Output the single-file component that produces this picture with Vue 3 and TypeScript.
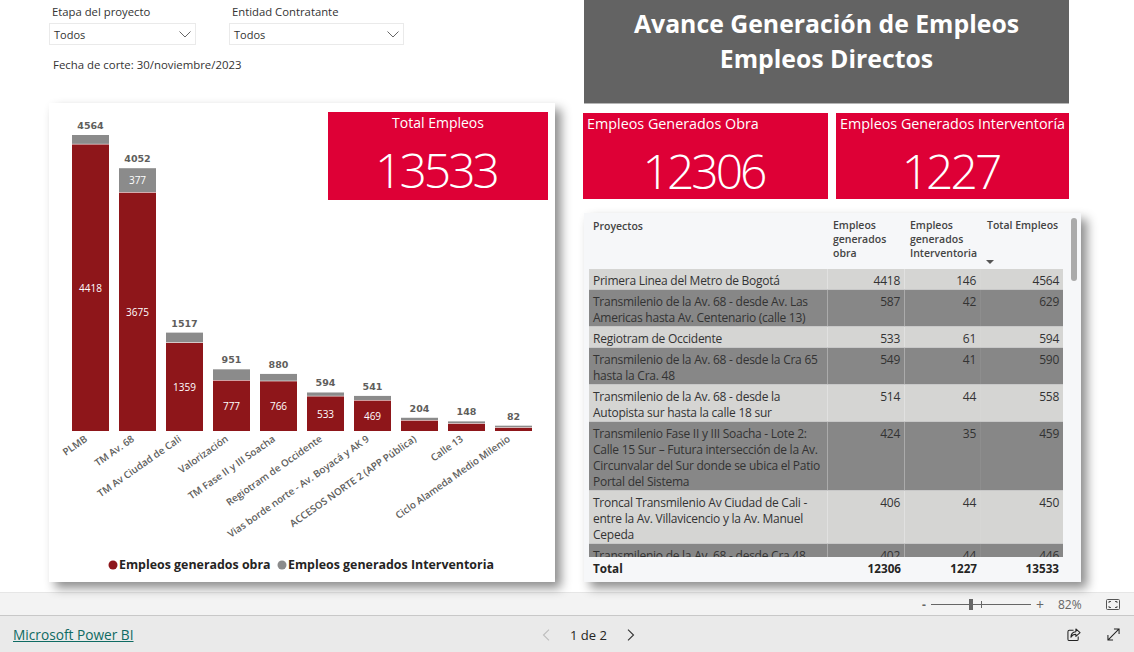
<script setup lang="ts">
type Bar = { name: string; obra: number; inter: number; showInter?: boolean; showObra?: boolean }
type Row = { name: string; obra: number; inter: number; total: number }

const baseY = 431
const scale = 296 / 4564
const barW = 37

const bars: Bar[] = [
  { name: 'PLMB', obra: 4418, inter: 146, showObra: true },
  { name: 'TM Av. 68', obra: 3675, inter: 377, showObra: true, showInter: true },
  { name: 'TM Av Ciudad de Cali', obra: 1359, inter: 158, showObra: true },
  { name: 'Valorización', obra: 777, inter: 174, showObra: true },
  { name: 'TM Fase II y III Soacha', obra: 766, inter: 114, showObra: true },
  { name: 'Regiotram de Occidente', obra: 533, inter: 61, showObra: true },
  { name: 'Vias borde norte - Av. Boyacá y AK 9', obra: 469, inter: 72, showObra: true },
  { name: 'ACCESOS NORTE 2 (APP Pública)', obra: 160, inter: 44 },
  { name: 'Calle 13', obra: 112, inter: 36 },
  { name: 'Ciclo Alameda Medio Milenio', obra: 50, inter: 32 },
]

const rows: Row[] = [
  { name: 'Primera Linea del Metro de Bogotá', obra: 4418, inter: 146, total: 4564 },
  { name: 'Transmilenio de la Av. 68 - desde Av. Las\nAmericas hasta Av. Centenario (calle 13)', obra: 587, inter: 42, total: 629 },
  { name: 'Regiotram de Occidente', obra: 533, inter: 61, total: 594 },
  { name: 'Transmilenio de la Av. 68 - desde la Cra 65\nhasta la Cra. 48', obra: 549, inter: 41, total: 590 },
  { name: 'Transmilenio de la Av. 68 - desde la\nAutopista sur hasta la calle 18 sur', obra: 514, inter: 44, total: 558 },
  { name: 'Transmilenio Fase II y III Soacha - Lote 2:\nCalle 15 Sur – Futura intersección de la Av.\nCircunvalar del Sur donde se ubica el Patio\nPortal del Sistema', obra: 424, inter: 35, total: 459 },
  { name: 'Troncal Transmilenio Av Ciudad de Cali -\nentre la Av. Villavicencio y la Av. Manuel\nCepeda', obra: 406, inter: 44, total: 450 },
  { name: 'Transmilenio de la Av. 68 - desde Cra 48\nhasta la calle 100', obra: 402, inter: 44, total: 446 },
]

function barX(i: number): number {
  return 72 + i * 47
}

function h(value: number): number {
  return value * scale
}
</script>

<template>
  <div class="page">
    <main class="canvas">
      <section class="left">
        <div class="filters">
          <div class="slicer slicer--etapa">
            <div class="slicer-title">Etapa del proyecto</div>
            <div class="dropdown">
              <span>Todos</span>
              <svg width="12" height="7" viewBox="0 0 12 7"><path d="M.5.5L6 6l5.500-5.500" fill="none" stroke="#666" /></svg>
            </div>
          </div>
          <div class="slicer slicer--entidad">
            <div class="slicer-title">Entidad Contratante</div>
            <div class="dropdown">
              <span>Todos</span>
              <svg width="12" height="7" viewBox="0 0 12 7"><path d="M.5.5L6 6l5.500-5.500" fill="none" stroke="#666" /></svg>
            </div>
          </div>
        </div>
        <div class="cutoff">Fecha de corte: 30/noviembre/2023</div>

        <div class="chart-card">
          <svg class="chart" viewBox="49 103 506 479" width="506" height="479">
            <g v-for="(bar, i) in bars" :key="bar.name">
              <rect :x="barX(i)" :y="baseY - h(bar.obra)" :width="barW" :height="h(bar.obra)" fill="#8e161a" />
              <rect :x="barX(i)" :y="baseY - h(bar.obra + bar.inter)" :width="barW" :height="h(bar.inter) - 0.6" fill="#8b8b8b" />
              <text class="total" :x="barX(i) + barW / 2" :y="baseY - h(bar.obra + bar.inter) - 6">{{ bar.obra + bar.inter }}</text>
              <text v-if="bar.showObra" class="inside" :x="barX(i) + barW / 2" :y="baseY - h(bar.obra) / 2 + 4">{{ bar.obra }}</text>
              <text v-if="bar.showInter" class="inside" :x="barX(i) + barW / 2" :y="baseY - h(bar.obra) - h(bar.inter) / 2 + 4">{{ bar.inter }}</text>
              <text class="tick" :transform="`translate(${barX(i) + barW / 2 - 2.5} 440.500) rotate(-35)`">{{ bar.name }}</text>
            </g>
            <circle cx="113" cy="565" r="4.5" fill="#8e161a" />
            <text class="legend" x="119" y="569">Empleos generados obra</text>
            <circle cx="282" cy="565" r="4.5" fill="#8b8b8b" />
            <text class="legend" x="288" y="569">Empleos generados Interventoria</text>
          </svg>
          <div class="kpi kpi--total">
            <div class="kpi-label">Total Empleos</div>
            <div class="kpi-value">13533</div>
          </div>
        </div>
      </section>

      <section class="right">
        <header class="title">Avance Generación de Empleos<br />Empleos Directos</header>
        <div class="kpis">
          <div class="kpi kpi--obra">
            <div class="kpi-label">Empleos Generados Obra</div>
            <div class="kpi-value">12306</div>
          </div>
          <div class="kpi kpi--inter">
            <div class="kpi-label">Empleos Generados Interventoría</div>
            <div class="kpi-value">1227</div>
          </div>
        </div>

        <div class="table-card">
          <div class="table">
            <div class="thead">
              <div class="cell cell--name">Proyectos</div>
              <div class="cell">Empleos generados obra</div>
              <div class="cell">Empleos generados Interventoria</div>
              <div class="cell cell--sorted">
                Total Empleos
                <span class="sort-arrow"></span>
              </div>
            </div>
            <div class="tbody">
              <div v-for="(row, i) in rows" :key="row.name" class="row" :class="i % 2 ? 'row--dark' : 'row--light'">
                <div class="cell cell--name">{{ row.name }}</div>
                <div class="cell cell--num">{{ row.obra }}</div>
                <div class="cell cell--num">{{ row.inter }}</div>
                <div class="cell cell--num cell--last">{{ row.total }}</div>
              </div>
            </div>
            <div class="tfoot">
              <div class="cell cell--name">Total</div>
              <div class="cell cell--num">12306</div>
              <div class="cell cell--num">1227</div>
              <div class="cell cell--num">13533</div>
            </div>
          </div>
          <div class="scrollbar"></div>
        </div>
      </section>
    </main>

    <div class="zoom-bar">
      <span class="zoom-sign">-</span>
      <div class="slider"><i class="slider-mid"></i><i class="slider-thumb"></i></div>
      <span class="zoom-sign zoom-sign--plus">+</span>
      <span class="zoom-value">82%</span>
      <svg class="fit" width="14" height="11" viewBox="0 0 14 11">
        <rect x=".5" y=".5" width="13" height="10" rx="1" fill="none" stroke="#555" />
        <path d="M3 4V2.500h2M9 2.500h2V4M11 7v1.500H9M5 8.500H3V7" fill="none" stroke="#555" />
      </svg>
    </div>

    <footer class="footer">
      <a class="brand">Microsoft Power BI</a>
      <nav class="pager">
        <svg width="8" height="12" viewBox="0 0 8 12"><path d="M7 .7L1.500 6 7 11.300" fill="none" stroke="#bdbdbd" stroke-width="1.1" /></svg>
        <span class="pager-text">1 de 2</span>
        <svg width="8" height="12" viewBox="0 0 8 12"><path d="M1 .7L6.500 6 1 11.300" fill="none" stroke="#333" stroke-width="1.1" /></svg>
      </nav>
      <div class="actions">
        <svg width="14" height="14" viewBox="0 0 15 15">
          <path d="M7 2.500H2.500a1.500 1.500 0 0 0-1.500 1.500v8a1.500 1.500 0 0 0 1.500 1.500h8a1.500 1.500 0 0 0 1.500-1.500V9" fill="none" stroke="#222" stroke-width="1.1" />
          <path d="M9.500 1l4.500 4-4.500 4V6.800C7 6.800 5.200 7.800 4.200 10c0-3.600 2-5.700 5.300-6z" fill="none" stroke="#222" stroke-width="1.1" stroke-linejoin="round" />
        </svg>
        <svg width="13" height="13" viewBox="0 0 14 14">
          <path d="M1 13L13 1M7.500 1H13v5.500M1 7.500V13h5.500" fill="none" stroke="#222" stroke-width="1.1" />
        </svg>
      </div>
    </footer>
  </div>
</template>

<style scoped>
.page {
  width: 1134px;
  height: 652px;
  display: flex;
  flex-direction: column;
  overflow: hidden;
  background: #fff;
  font-family: "Open Sans", "Noto Sans", sans-serif;
  color: #252423;
}

.canvas {
  height: 592px;
  display: flex;
  flex: none;
}

.left {
  width: 506px;
  margin-left: 49px;
  display: flex;
  flex-direction: column;
}

.filters {
  display: flex;
  gap: 33px;
  padding-top: 3px;
}

.slicer-title {
  height: 20px;
  padding-left: 3px;
  font-size: 11.3px;
  line-height: 17px;
  color: #333;
}

.slicer--etapa {
  width: 147px;
}

.slicer--entidad {
  width: 175px;
}

.dropdown {
  height: 22px;
  box-sizing: border-box;
  border: 1px solid #eaeaea;
  display: flex;
  align-items: center;
  justify-content: space-between;
  padding: 0 4px;
  font-size: 11px;
  color: #333;
}

.cutoff {
  margin-top: 12px;
  padding-left: 4px;
  font-size: 11.4px;
  line-height: 16px;
  color: #333;
}

.chart-card {
  position: relative;
  margin-top: 30px;
  width: 506px;
  height: 479px;
  background: #fff;
  box-shadow: 6px 6px 10px rgba(0, 0, 0, 0.45);
}

.chart {
  display: block;
}

.chart text {
  font-family: "Open Sans", "Noto Sans", sans-serif;
}

.chart .total {
  font-family: "DejaVu Sans", sans-serif;
  font-size: 9.5px;
  font-weight: 700;
  fill: #605e5c;
  text-anchor: middle;
}

.inside {
  font-size: 10px;
  fill: #fff;
  text-anchor: middle;
}

.tick {
  font-size: 9.9px;
  font-weight: 600;
  fill: #605e5c;
  text-anchor: end;
}

.legend {
  font-size: 12.4px;
  font-weight: 700;
  fill: #252423;
}

.kpi {
  background: #de0036;
  color: #fff;
}

.kpi--total {
  position: absolute;
  left: 279px;
  top: 9px;
  width: 220px;
  height: 88px;
  text-align: center;
}

.kpi--obra {
  width: 245px;
  height: 86px;
}

.kpi--inter {
  width: 233px;
  height: 86px;
}

.kpi--obra .kpi-label,
.kpi--inter .kpi-label {
  padding-left: 4px;
  font-size: 14.35px;
}

.kpi-label {
  font-size: 14px;
  line-height: 22px;
}

.kpi-value {
  margin-top: 10px;
  padding-right: 4px;
  font-size: 48px;
  font-weight: 300;
  line-height: 52px;
  text-align: center;
  letter-spacing: -3px;
}

.right {
  margin-left: 28px;
  width: 510px;
  display: flex;
  flex-direction: column;
}

.title {
  margin-left: 1px;
  width: 485px;
  height: 104px;
  box-sizing: border-box;
  padding-top: 6px;
  background: #636363;
  border-bottom: 1px solid #b5b5b5;
  color: #fff;
  font-size: 24.8px;
  font-weight: 700;
  line-height: 35px;
  text-align: center;
}

.kpis {
  display: flex;
  gap: 8px;
  margin-top: 9px;
}

.table-card {
  position: relative;
  margin-top: 14px;
  margin-left: 1px;
  width: 497px;
  height: 369px;
  background: #f6f7f9;
  box-shadow: 6px 6px 10px rgba(0, 0, 0, 0.45);
}

.table {
  margin-left: 5px;
  width: 474px;
  font-size: 12px;
  letter-spacing: -0.25px;
  color: #333;
}

.thead,
.row,
.tfoot {
  display: grid;
  grid-template-columns: 239px 77px 76px 82px;
}

.thead {
  height: 56px;
  font-weight: 600;
  font-size: 10.5px;
  line-height: 14px;
  letter-spacing: 0;
  color: #444;
}

.thead .cell {
  position: relative;
  padding-top: 5px;
  padding-left: 5px;
  padding-right: 0;
}

.thead .cell--name {
  padding-left: 4px;
}

.thead .cell--sorted {
  padding-left: 6px;
}

.sort-arrow {
  position: absolute;
  left: 5px;
  top: 47px;
  border-left: 4px solid transparent;
  border-right: 4px solid transparent;
  border-top: 4px solid #555;
}

.tbody {
  height: 288px;
  overflow: hidden;
}

.row {
  border-bottom: 1px solid #c8c8c8;
}

.row--light {
  background: #d5d5d3;
}

.row--dark {
  background: #878787;
}

.cell--name {
  white-space: pre-line;
  padding: 4px 4px 0;
  line-height: 16px;
}

.row .cell--name,
.row .cell--num:nth-child(2) {
  border-right: 1px solid rgba(255, 255, 255, 0.3);
}

.row .cell--num:nth-child(3) {
  border-right: 1px solid rgba(255, 255, 255, 0.06);
}

.cell--num {
  padding: 4px 4px 0 0;
  line-height: 16px;
  text-align: right;
}

.tfoot {
  height: 21px;
  align-items: center;
  font-weight: 700;
  color: #252423;
  font-size: 11.7px;
  letter-spacing: 0;
}

.tfoot .cell {
  padding-top: 0;
}

.scrollbar {
  position: absolute;
  left: 487px;
  top: 5px;
  width: 6px;
  height: 63px;
  border-radius: 3px;
  background: #aaa;
}

.zoom-bar {
  height: 24px;
  box-sizing: border-box;
  flex: none;
  background: #f3f3f3;
  border-top: 1px solid #e6e6e6;
  border-bottom: 1px solid #c8c8c8;
  display: flex;
  align-items: center;
  padding-left: 922px;
  color: #666;
  font-size: 12px;
}

.zoom-sign {
  width: 9px;
  font-weight: 700;
}

.zoom-sign--plus {
  font-size: 14px;
  font-weight: 400;
  margin-left: 5px;
}

.slider {
  position: relative;
  width: 100px;
  height: 1px;
  background: #666;
}

.slider-mid {
  position: absolute;
  left: 50px;
  top: -3px;
  width: 1px;
  height: 7px;
  background: #666;
}

.slider-thumb {
  position: absolute;
  left: 38px;
  top: -5px;
  width: 4px;
  height: 11px;
  background: #666;
}

.zoom-value {
  margin-left: 13px;
  width: 25px;
}

.fit {
  margin-left: 23px;
}

.footer {
  flex: 1;
  background: #eaeaea;
  display: grid;
  grid-template-columns: 529px auto 1fr;
  align-items: center;
  padding: 1px 14px 0 13px;
}

.brand {
  font-size: 13.7px;
  color: #0f6b63;
  text-decoration: underline;
}

.pager {
  display: flex;
  align-items: center;
  gap: 20px;
  font-size: 13px;
  color: #252423;
}

.actions {
  display: flex;
  justify-content: flex-end;
  gap: 26px;
}
</style>
